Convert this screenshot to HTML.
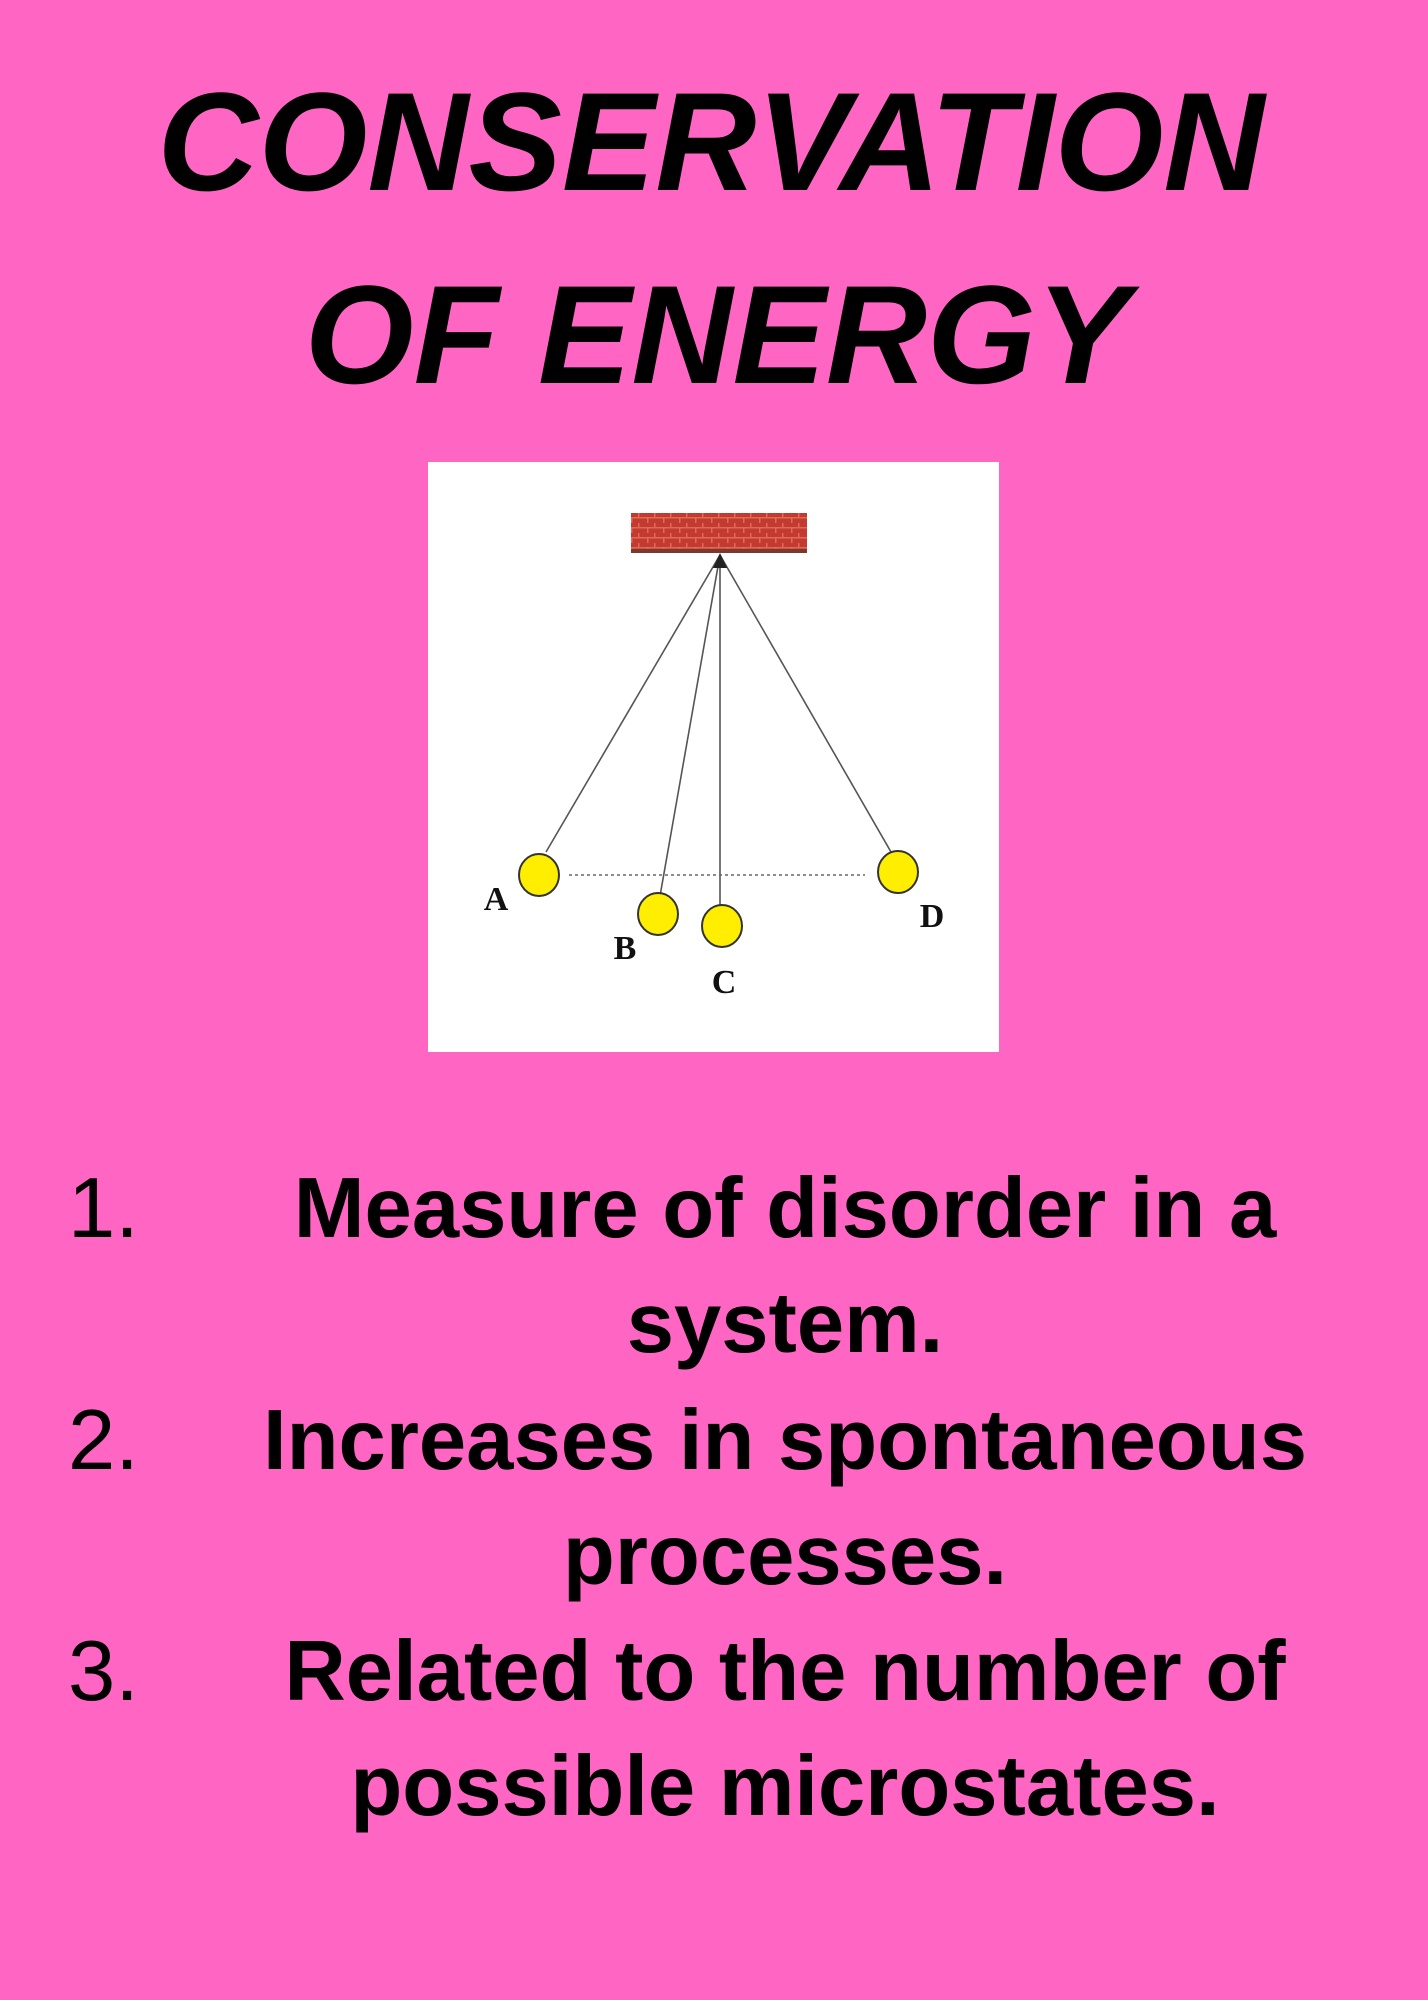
<!DOCTYPE html>
<html><head><meta charset="utf-8">
<style>
html,body{margin:0;padding:0}
body{width:1428px;height:2000px;background:#ff66c4;position:relative;overflow:hidden;font-family:"Liberation Sans",sans-serif;color:#000}
.t{position:absolute;left:0;width:1428px;text-align:center;font-size:140px;line-height:140px;font-weight:bold;font-style:italic;white-space:nowrap}
.l{position:absolute;left:185px;width:1200px;text-align:center;font-size:85px;line-height:85px;font-weight:bold;white-space:nowrap}
.n{position:absolute;left:68px;font-size:85px;line-height:85px;white-space:nowrap}
</style></head><body>
<div class="t" style="top:72px;left:-3px">CONSERVATION</div>
<div class="t" style="top:265px;left:3px">OF ENERGY</div>

<svg style="position:absolute;left:428px;top:462px" width="571" height="590" viewBox="428 462 571 590">
<defs>
<pattern id="br" x="631" y="513" width="16" height="10" patternUnits="userSpaceOnUse">
<rect width="16" height="10" fill="#c23a30"/>
<rect x="0" y="4" width="16" height="1.5" fill="#e06a55"/>
<rect x="7" y="0" width="1.5" height="4" fill="#e06a55"/>
<rect x="0" y="5" width="1.5" height="5" fill="#e06a55"/>
</pattern>
</defs>
<rect x="428" y="462" width="571" height="590" fill="#fff"/>
<rect x="631" y="513" width="176" height="40" fill="url(#br)"/>
<rect x="631" y="549" width="176" height="4" fill="#7a3a2a"/>
<g stroke="#555" stroke-width="1.6" fill="none">
<line x1="720" y1="555" x2="546" y2="852"/>
<line x1="720" y1="555" x2="660" y2="896"/>
<line x1="720" y1="555" x2="720" y2="906"/>
<line x1="720" y1="555" x2="891" y2="852"/>
</g>
<path d="M713 568 L720 553 L727 568 Z" fill="#222"/>
<line x1="569" y1="875" x2="865" y2="875" stroke="#666" stroke-width="1.6" stroke-dasharray="3,3"/>
<g fill="#ffee00" stroke="#333" stroke-width="2">
<ellipse cx="539" cy="875" rx="20" ry="21"/>
<ellipse cx="658" cy="914" rx="20" ry="21"/>
<ellipse cx="722" cy="926" rx="20" ry="21"/>
<ellipse cx="898" cy="872" rx="20" ry="21"/>
</g>
<g font-family="Liberation Serif,serif" font-weight="bold" font-size="34" fill="#111" text-anchor="middle">
<text x="496" y="910">A</text>
<text x="625" y="959">B</text>
<text x="724" y="993">C</text>
<text x="932" y="927">D</text>
</g>
</svg>

<div class="n" style="top:1166px">1.</div>
<div class="n" style="top:1398px">2.</div>
<div class="n" style="top:1629px">3.</div>

<div class="l" style="top:1166px">Measure of disorder in a</div>
<div class="l" style="top:1281px">system.</div>
<div class="l" style="top:1398px">Increases in spontaneous</div>
<div class="l" style="top:1513px">processes.</div>
<div class="l" style="top:1629px">Related to the number of</div>
<div class="l" style="top:1744px">possible microstates.</div>
</body></html>
